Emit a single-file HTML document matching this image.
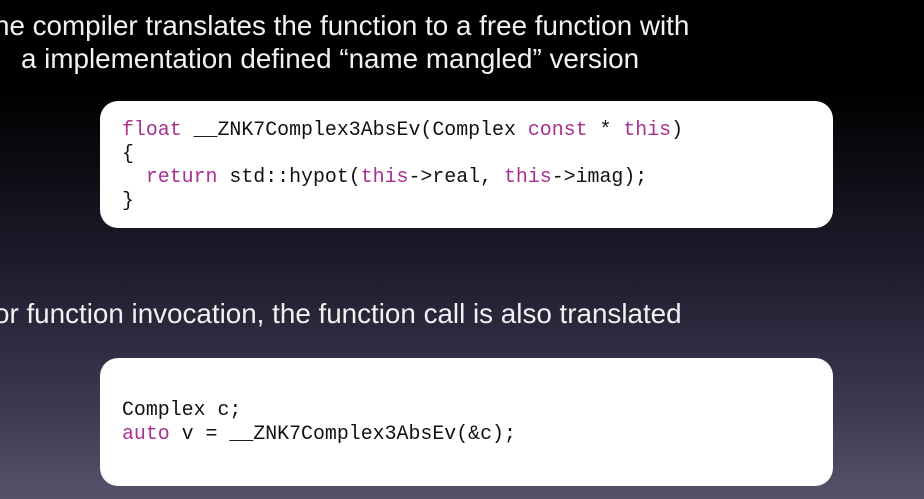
<!DOCTYPE html>
<html><head><style>
body{margin:0;width:924px;height:499px;overflow:hidden;background:linear-gradient(to bottom,#000 0px,#000 90px,#1c1b2b 260px,#3a384f 400px,#55526a 499px);font-family:"Liberation Sans",sans-serif;position:relative}
.t{position:absolute;color:#f2f2f2;font-size:27.8px;white-space:nowrap;letter-spacing:0}
.box{position:absolute;left:100px;width:733px;background:#fff;border-radius:18px}
pre{position:absolute;left:122px;margin:0;font-family:"Liberation Mono",monospace;font-size:19.9px;line-height:23.5px;color:#111}
.k{color:#a8308f}
</style></head><body>
<div class="t" style="left:-6px;top:10px">he compiler translates the function to a free function with</div>
<div class="t" style="left:21px;top:43px">a implementation defined “name mangled” version</div>
<div class="box" style="top:101px;height:127px"></div>
<pre style="top:118px"><span class="k">float</span> __ZNK7Complex3AbsEv(Complex <span class="k">const</span> * <span class="k">this</span>)
{
  <span class="k">return</span> std::hypot(<span class="k">this</span>-&gt;real, <span class="k">this</span>-&gt;imag);
}</pre>
<div class="t" style="left:-6px;top:298px">or function invocation, the function call is also translated</div>
<div class="box" style="top:358px;height:128px"></div>
<pre style="top:398px">Complex c;
<span class="k">auto</span> v = __ZNK7Complex3AbsEv(&amp;c);</pre>
</body></html>
